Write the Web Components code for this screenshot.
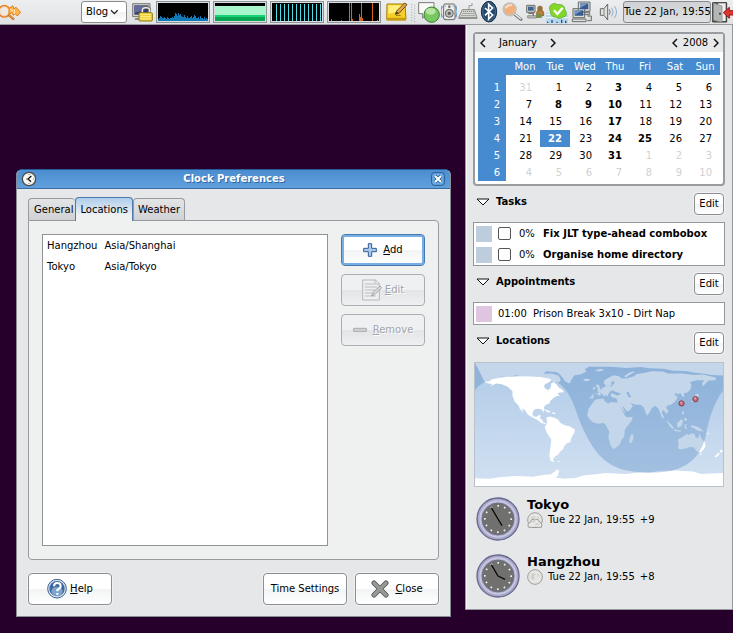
<!DOCTYPE html>
<html lang="en">
<head>
<meta charset="utf-8">
<title>Clock Preferences</title>
<style>
  body {
    margin: 0;
    min-height: 100vh;
    background: #26002b;
    color: #000;
    font: 10px/14px "DejaVu Sans", sans-serif;
  }
</style>
</head>
<body>
<desk-shell></desk-shell>
<script>
const html = String.raw;

class BaseElement extends HTMLElement {
  connectedCallback() {
    if (this.shadowRoot) return;
    this.attachShadow({ mode: "open" });
    this.shadowRoot.innerHTML = `<style>
      * { box-sizing: border-box; }
      button, select, input { font: inherit; color: inherit; margin: 0; }
      svg { display: block; flex: none; }
      ${this.constructor.css}
    </style>${this.render()}`;
  }
}

// width, viewBox, markup
const ICONS = {
  finder: [21, "0 0 63 72", `<g fill="none" stroke="#e98324"><circle cx="13" cy="34" r="17" stroke-width="5"/><circle cx="13" cy="34" r="14" fill="#eee9e4" stroke="#f6bd78" stroke-width="2"/><path d="M25 44L42 58" stroke="#bf6715" stroke-width="7"/><path d="M26 44L41 56" stroke="#ffb554" stroke-width="3"/></g><path d="M27 26l11-9 5 11 4-7 15 16-10 11-5-7-7 5-4-8-9 4z" fill="#ffb54c" stroke="#e58118" stroke-width="3"/><path d="M43 28v14M31 28l8 5" stroke="#fff0cf" stroke-width="3"/>`],
  lock: [23, "390 0 69 72", `<path d="M398 11h52v39h-52z" fill="#d5d6cf" stroke="#777970" stroke-width="3"/><path d="M403 16h42v28h-42z" fill="#343b70"/><path d="M403 16h42v9l-42 15z" fill="#656c9c"/><path d="M406 54h34v6h-36z" fill="#888a84"/><path d="M427 40V30q0-8 11-8t11 8v10" fill="none" stroke="#6c6c66" stroke-width="8"/><path d="M427 40V30q0-7 11-7t11 7v10" fill="none" stroke="#eee" stroke-width="4"/><rect x="417" y="38" width="40" height="25" rx="3" fill="#f1cf3f" stroke="#8f7a0b" stroke-width="3"/><path d="M421 43h32M421 50h32M421 57h32" stroke="#fff08b" stroke-width="3"/>`],
  note: [24, "429 0 72 72", `<path d="M438 12h54l3 46h-58z" fill="#f5d027" stroke="#aa800d" stroke-width="3"/><path d="M438 53h57v9h-58z" fill="#c99b12"/><path d="M442 16h46l-15 19-31 6z" fill="#fff07d"/><path d="M465 47q8-3 14 0" fill="none" stroke="#8e7010" stroke-width="3"/><path d="M463 43l4-10 24-24 7 5-23 25z" fill="#e9a744" stroke="#6c4b1d" stroke-width="3"/><path d="M463 43l4-8 5 4z" fill="#292929"/>`],
  grip: [6, "510 0 18 72", `<path d="M512 12v54M521 15v51" stroke="#a7a9ac" stroke-width="3" stroke-dasharray="3 5"/>`],
  chat: [22, "24 0 66 72", `<path d="M26 8h46v33H49L38 55V41H26z" fill="#f9faf8" stroke="#777a76" stroke-width="3"/><circle cx="65" cy="44" r="23" fill="#77c861" stroke="#387e2c" stroke-width="3"/><ellipse cx="62" cy="34" rx="15" ry="10" fill="#b7e5a4"/>`],
  speaker: [16, "93 0 48 72", `<path d="M97 18q-9 18 0 34M137 18q9 18 0 34" fill="none" stroke="#6a9ec5" stroke-width="4"/><rect x="101" y="12" width="34" height="47" rx="4" fill="#eeefed" stroke="#686a67" stroke-width="3"/><circle cx="118" cy="40" r="12" fill="#bfc1be" stroke="#5f605e" stroke-width="3"/><circle cx="118" cy="40" r="5" fill="#5e605e"/><circle cx="118" cy="20" r="4" fill="#777"/><path d="M106 17v2M130 17v2M106 55v1M130 55v1" stroke="#333" stroke-width="3"/>`],
  keyboard: [20, "144 0 60 72", `<path d="M177 29V17h9V9" fill="none" stroke="#979995" stroke-width="3"/><path d="M157 29h36l8 23h-54z" fill="#e4e5e1" stroke="#858783" stroke-width="3"/><path d="M145 52h57v5h-57z" fill="#92948f"/><path d="M159 34h33M157 40h38M154 46h43" stroke="#777974" stroke-width="3" stroke-dasharray="4 2"/>`],
  bluetooth: [20, "207 0 60 72", `<ellipse cx="237" cy="35" rx="23" ry="31" fill="#24456a" stroke="#152e49" stroke-width="3"/><ellipse cx="237" cy="35" rx="19" ry="27" fill="none" stroke="#62819d" stroke-width="2"/><path d="M225 24l23 21-12 12V13l12 11-23 22" fill="none" stroke="#fff" stroke-width="5"/>`],
  magnifier: [24, "270 0 72 72", `<path d="M314 43l19 15" stroke="#777975" stroke-width="9" stroke-linecap="round"/><path d="M315 43l17 13" stroke="#f4f4f2" stroke-width="4" stroke-linecap="round"/><circle cx="299" cy="28" r="19" fill="#f2ae7c" stroke="#c2c3be" stroke-width="5"/><path d="M287 25q6-12 19-9" fill="none" stroke="#ffe1c9" stroke-width="5"/>`],
  network: [20, "345 0 60 72", `<path d="M350 16h25v21h-25z" fill="#ced0cb" stroke="#6b6d6b" stroke-width="3"/><path d="M354 20h17v12h-17z" fill="#3e6291"/><path d="M355 40h15v11h22" fill="none" stroke="#747671" stroke-width="4"/><path d="M353 47h26v7h-26z" fill="#bcbdb8" stroke="#777" stroke-width="2"/><path d="M380 38q0-8 10-8t11 8v9h-21z" fill="#b88038" stroke="#765018" stroke-width="2"/><circle cx="390" cy="25" r="8" fill="#99723a"/><path d="M378 53q0-11 8-12 9 0 10 12z" fill="#6f9048"/>`],
  messenger: [22, "408 0 66 72", `<path d="M408 39h66v31h-66z" fill="#b8d7ed"/><path d="M409 43h64M409 53h64" stroke="#fff" stroke-width="3"/><path d="M413 69v-4M426 69v-9M441 69v-4M455 69v-10M467 69v-7" stroke="#174f81" stroke-width="4"/><path d="M425 13q9-6 18 1 20-3 22 15 11 20-7 23-12 7-18 0-19 0-19-18-7-14 4-21z" fill="#83d72a" stroke="#55a21f" stroke-width="2"/><path d="M432 31l10 11 16-19" fill="none" stroke="#fff" stroke-width="7"/>`],
  computers: [24, "27 0 72 72", `<g stroke="#696b68" stroke-width="3" fill="#dedfdb"><path d="M55 6h35v28H55zM61 38h28v6H61zM39 26h35v27H39zM37 57h41v8H37z"/><path d="M82 48h12v14H82"/></g><path d="M60 10h25v18H60zM44 31h25v16H44z" fill="#375b91"/><path d="M60 10h25L60 24zM44 31h25L44 44z" fill="#7897c0"/>`],
  volume: [28, "102 0 84 72", `<path d="M121 26h11l11-14v48l-11-14h-11z" fill="#dfe1df" stroke="#686a68" stroke-width="3"/><path d="M132 27v19" stroke="#858785" stroke-width="3"/><path d="M148 28q5 8 0 16" fill="none" stroke="#777977" stroke-width="3"/><path d="M155 23q9 13 0 26M163 18q13 18 0 36" fill="none" stroke="#8eafcc" stroke-width="3"/>`],
  exit: [21, "456 0 63 72", `<path d="M458 8h42v58h-42z" fill="#5c5e5c" stroke="#373937" stroke-width="3"/><path d="M474 10h23v53h-23z" fill="#eee"/><path d="M460 9l26 9v49l-26-6z" fill="#b4b6b3" stroke="#7d7f7c" stroke-width="2"/><circle cx="480" cy="41" r="3" fill="#333"/><path d="M490 38l18-16v10h13v13h-13v10z" fill="#dd3434" stroke="#981616" stroke-width="3"/>`],
  chevron: [9, "0 0 27 72", `<path d="M3 31l10 10 10-10" fill="none" stroke="#222" stroke-width="4"/>`],
};

class PanelIcon extends BaseElement {
  render() {
    const [width, box, art] = ICONS[this.getAttribute("name")];
    return `<svg width="${width}" height="24" viewBox="${box}" aria-hidden="true">${art}</svg>`;
  }
  static css = `:host { display: block; flex: none; }`;
}
customElements.define("panel-icon", PanelIcon);

class LoadGraph extends BaseElement {
  bars(values, step, color) {
    return values.map((v, i) => v ? `<rect x="${i * step}" y="${18 - v}" width="1" height="${v}" fill="${color}"/>` : "").join("");
  }
  render() {
    const cpu = [2,3,5,4,3,3,4,3,2,4,3,2,3,3,4,3,5,8,7,5,8,6,7,5,4,4,6,4,3,5,3,3,4,5,3,4,6,5,3,3,4,2,5,3,3,2,4,2,3,2];
    const disk = Array(50).fill(0);
    Object.assign(disk, { 2: 2, 12: 1, 20: 18, 22: 18, 23: 2, 30: 7, 31: 4, 32: 18, 33: 3, 43: 18, 48: 1 });
    const shapes = {
      cpu: this.bars(cpu, 1, "#1179b8"),
      memory: `<path d="M0 3h50v15H0z" fill="#a9f5cb"/><path d="M0 12h50v6H0z" fill="#18d273"/><path d="M0 14h50v4H0z" fill="#08a653"/>`,
      net: this.bars([0,17,17,17,17,17,17,17,17,17,17,17,17], 4, "#4fdbe6"),
      disk: this.bars(disk, 1, "#d8641c"),
    };
    return `<svg viewBox="0 0 50 18" shape-rendering="crispEdges" preserveAspectRatio="none" aria-hidden="true">${shapes[this.getAttribute("kind")]}</svg>`;
  }
  static css = `
    :host { display: block; width: 54px; height: 22px; flex: none; box-sizing: border-box; border: 1px solid #8e9396; padding: 1px; background: #d9dddf; }
    svg { width: 100%; height: 100%; background: #000; }
  `;
}
customElements.define("load-graph", LoadGraph);

class TopPanel extends BaseElement {
  render() {
    const tray = ["chat", "speaker", "keyboard", "bluetooth", "magnifier", "network", "messenger", "computers", "volume"];
    return html`
      <panel-icon name="finder"></panel-icon>
      <div class="applets">
        <label class="picker">
          <select aria-label="Search in"><option>Blog</option></select>
          <panel-icon name="chevron"></panel-icon>
        </label>
        <panel-icon name="lock"></panel-icon>
        <load-graph kind="cpu"></load-graph>
        <load-graph kind="memory"></load-graph>
        <load-graph kind="net"></load-graph>
        <load-graph kind="disk"></load-graph>
        <panel-icon name="note"></panel-icon>
        <panel-icon name="grip"></panel-icon>
      </div>
      <div class="tray">
        ${tray.map(name => `<panel-icon name="${name}"></panel-icon>`).join("")}
        <button class="clock">Tue 22 Jan, 19:55</button>
        <panel-icon name="exit"></panel-icon>
      </div>`;
  }
  static css = `
    :host { display: flex; align-items: center; box-sizing: border-box; height: 25px; background: linear-gradient(#eceeef, #e0e2e4); border-bottom: 1px solid #9b9b9f; }
    .applets { display: flex; align-items: center; gap: 3px; margin-left: auto; }
    .tray { display: flex; align-items: center; gap: 1px; margin-left: 1px; }
    .picker { display: flex; align-items: center; width: 46px; height: 22px; border: 1px solid #898b8d; border-radius: 3px; background: linear-gradient(#fff 50%, #f1f2f3 50%, #fff); }
    select { appearance: none; border: 0; padding: 0 0 0 4px; width: 28px; background: none; outline: 0; }
    .clock { width: 88px; height: 22px; padding: 0; border: 1px solid #888a8d; border-radius: 3px; background: linear-gradient(#cfd1d4, #dfe1e3); white-space: nowrap; }
  `;
}
customElements.define("top-panel", TopPanel);

class PushButton extends BaseElement {
  render() {
    const disabled = this.hasAttribute("disabled") ? "disabled" : "";
    return `<button ${disabled}><slot name="icon"></slot><span><slot></slot></span></button>`;
  }
  static css = `
    :host { display: block; width: 84px; height: 32px; }
    :host([small]) { width: 30px; height: 22px; }
    button {
      display: flex; align-items: center; justify-content: center; gap: 3px;
      width: 100%; height: 100%; padding: 0;
      border: 1px solid #8b8d90; border-radius: 4px;
      background: linear-gradient(#fff 50%, #f2f3f4 50%, #fff);
      box-shadow: 0 0 0 1px #f0f1f2; white-space: nowrap;
    }
    :host([focused]) button { border-color: #4779ae; box-shadow: inset 0 0 0 2px #77aee3; gap: 6px; }
    :host([spaced]) button { gap: 6px; }
    button:disabled { color: #a3a6a8; border-color: #aaadb0; background: linear-gradient(#eff0f1 50%, #e3e4e6 50%, #eff0f1); text-shadow: 1px 1px #fff; }
  `;
}
customElements.define("push-button", PushButton);

class PrefsDialog extends BaseElement {
  render() {
    return html`
      <header>
        <svg width="16" height="16" viewBox="0 0 48 48" aria-hidden="true"><circle cx="24" cy="24" r="20" fill="#f7f7f3" stroke="#4d4f48" stroke-width="4"/><path d="M31 15L21 24l9 8" fill="none" stroke="#111" stroke-width="4"/><path d="M15 24h7M24 9v3M24 36v3M36 24h3" stroke="#777" stroke-width="3"/></svg>
        <h1>Clock Preferences</h1>
        <button class="close" aria-label="Close window"><svg width="14" height="14" viewBox="0 0 42 42"><rect x="2" y="2" width="38" height="38" rx="8" fill="#6caae3" stroke="#23588e" stroke-width="3"/><path d="M12 12l18 18M30 12L12 30" stroke="#24588b" stroke-width="10"/><path d="M12 12l18 18M30 12L12 30" stroke="#fff" stroke-width="6"/></svg></button>
      </header>
      <div class="content">
        <nav role="tablist">
          <button role="tab" class="first">General</button>
          <button role="tab" aria-selected="true">Locations</button>
          <button role="tab">Weather</button>
        </nav>
        <section role="tabpanel">
          <div class="list">
            <table aria-label="Locations">
              <tr><td>Hangzhou</td><td>Asia/Shanghai</td></tr>
              <tr><td>Tokyo</td><td>Asia/Tokyo</td></tr>
            </table>
          </div>
          <div class="actions">
            <push-button focused>
              <svg slot="icon" width="14" height="14" viewBox="0 0 42 42"><path d="M16 2h10v14h14v10H26v14H16V26H2V16h14z" fill="#a9c8ea" stroke="#315e95" stroke-width="3"/></svg>
              <u>A</u>dd
            </push-button>
            <push-button disabled>
              <svg slot="icon" width="20" height="22" viewBox="0 0 60 66"><path d="M2 3h38l12 11v49H2z" fill="#eff0f1" stroke="#b5b8ba" stroke-width="3"/><path d="M39 3v12h13M8 15h29M8 24h37M8 33h31M8 42h25M8 51h33" fill="none" stroke="#babdbf" stroke-width="3"/><path d="M29 51l5-12 20-18 5 5-20 20z" fill="#d7d9da" stroke="#a3a6a8" stroke-width="3"/></svg>
              <u>E</u>dit
            </push-button>
            <push-button disabled spaced>
              <svg slot="icon" width="14" height="6" viewBox="0 0 42 18"><path d="M2 4h38v9H2z" fill="#d1d3d5" stroke="#a9acae" stroke-width="3"/></svg>
              <u>R</u>emove
            </push-button>
          </div>
        </section>
        <footer>
          <push-button class="help">
            <svg slot="icon" width="20" height="20" viewBox="0 0 60 60"><circle cx="30" cy="29" r="28" fill="#dfe9f2" stroke="#345d8f" stroke-width="3"/><circle cx="30" cy="29" r="23" fill="#3d679e"/><ellipse cx="30" cy="37" rx="17" ry="14" fill="#7da2cb"/><path d="M21 22q0-10 10-10t10 9q0 7-10 12v4" fill="none" stroke="#fff" stroke-width="6"/><path d="M28 42h6v6h-6z" fill="#fff"/></svg>
            <u>H</u>elp
          </push-button>
          <push-button>Time Settings</push-button>
          <push-button spaced>
            <svg slot="icon" width="18" height="18" viewBox="0 0 54 54"><g fill="none" stroke-linecap="round"><path d="M9 9l36 36M45 9L9 45" stroke="#565955" stroke-width="15"/><path d="M9 9l36 36M45 9L9 45" stroke="#969995" stroke-width="10"/></g></svg>
            <u>C</u>lose
          </push-button>
        </footer>
      </div>`;
  }
  static css = `
    :host { display: block; box-sizing: border-box; border: 1px solid #8b8d94; border-top-color: #235c99; border-radius: 6px 6px 0 0; background: #e6e7e9; }
    header { display: flex; align-items: center; height: 19px; padding: 0 5px 0 4px; color: #fff; background: linear-gradient(#4b8dd0, #61a0dd); border-bottom: 1px solid #386ca5; border-radius: 5px 5px 0 0; }
    h1 { flex: 1; margin: 0; font: inherit; font-weight: bold; text-align: center; text-shadow: 1px 1px #2c659f; }
    .close { padding: 0; border: 0; background: none; }
    .content { padding: 7px 11px 11px; }
    nav { display: flex; align-items: flex-end; height: 24px; }
    nav button { height: 22px; padding: 0 4px; border: 1px solid #989a9d; border-bottom: 0; border-radius: 4px 4px 0 0; background: linear-gradient(#e4e5e7, #cfd1d4); }
    nav .first { padding: 0 2px 0 5px; border-right: 0; }
    nav [aria-selected] { height: 24px; margin-bottom: -1px; border-color: #4c79a9; background: linear-gradient(#aecded, #eff1f1 75%); z-index: 1; }
    section { display: flex; gap: 13px; min-height: 340px; padding: 13px; border: 1px solid #989a9d; border-radius: 0 4px 4px 4px; background: #eff1f1; }
    .list { flex: 1; border: 1px solid #919395; background: #fff; }
    table { border-spacing: 0; }
    td { height: 21px; padding: 0 3px 0 4px; }
    .actions { display: flex; flex-direction: column; gap: 8px; }
    footer { display: flex; gap: 8px; margin-top: 13px; }
    .help { margin-right: auto; }
  `;
}
customElements.define("prefs-dialog", PrefsDialog);

class MonthCalendar extends BaseElement {
  render() {
    const days = ["Mon", "Tue", "Wed", "Thu", "Fri", "Sat", "Sun"];
    const busy = [3, 8, 9, 10, 17, 24, 25, 31];
    const rows = [];
    for (let week = 0; week < 6; week++) {
      const cells = days.map((_, i) => {
        const n = week * 7 + i;
        const outside = n < 1 || n > 31;
        const day = n < 1 ? 31 : n > 31 ? n - 31 : n;
        const name = outside ? "outside" : n === 22 ? "today" : busy.includes(n) ? "busy" : "";
        return `<td class="${name}">${day}</td>`;
      }).join("");
      rows.push(`<tr><th scope="row">${week + 1}</th>${cells}</tr>`);
    }
    const arrow = (label, d) => `<button aria-label="${label}"><svg width="6" height="10" viewBox="0 0 6 10"><path d="${d}" fill="none" stroke="#111" stroke-width="1.5"/></svg></button>`;
    const prev = "M5 1L1 5l4 4";
    const next = "M1 1l4 4-4 4";
    return html`
      <header>
        ${arrow("Previous month", prev)}<span class="month">January</span>${arrow("Next month", next)}
        <i></i>
        ${arrow("Previous year", prev)}<span class="year">2008</span>${arrow("Next year", next)}
      </header>
      <table>
        <thead><tr><td></td>${days.map(d => `<th scope="col">${d}</th>`).join("")}</tr></thead>
        <tbody><tr class="space"><th></th></tr>${rows.join("")}</tbody>
      </table>`;
  }
  static css = `
    :host { display: block; box-sizing: border-box; border: 2px solid #999c9f; border-radius: 4px; background: #fff; }
    header { display: flex; align-items: center; height: 18px; padding: 0 4px 0 5px; background: #e6e8e9; }
    header button { display: flex; padding: 0; border: 0; background: none; }
    .month { width: 64px; text-align: center; }
    .year { width: 35px; text-align: center; }
    i { flex: 1; }
    table { width: calc(100% - 6px); margin: 6px 3px 3px; border-spacing: 0; table-layout: fixed; }
    th, td { height: 17px; padding: 0; line-height: 17px; }
    th { font-weight: normal; }
    thead { color: #fff; background: #468bd0; }
    tr > :first-child { width: 32px; }
    tbody th { padding-right: 10px; text-align: right; color: #fff; background: linear-gradient(90deg, #468bd0 28px, #fff 28px); }
    tbody td { padding-right: 8px; text-align: right; }
    .space th { height: 4px; line-height: 4px; }
    .busy, .today { font-weight: bold; }
    .today { color: #fff; background: #468bd0; }
    .outside { color: #cfd1d3; }
  `;
}
customElements.define("month-calendar", MonthCalendar);

class FoldSection extends BaseElement {
  render() {
    return html`
      <header>
        <button class="toggle" aria-expanded="true"><svg width="14" height="8" viewBox="0 0 14 8"><path d="M1 1h12L7 7z" fill="#fff" stroke="#111"/></svg><h2>${this.getAttribute("heading")}</h2></button>
        <push-button small>Edit</push-button>
      </header>
      <slot></slot>`;
  }
  static css = `
    :host { display: block; margin-top: 7px; }
    header { display: flex; justify-content: space-between; margin-bottom: 7px; padding: 0 1px 0 3px; }
    .toggle { display: flex; align-items: center; gap: 6px; height: 18px; padding: 0; border: 0; background: none; }
    h2 { margin: 0; font: inherit; font-weight: bold; }
  `;
}
customElements.define("fold-section", FoldSection);

class TaskList extends BaseElement {
  render() {
    const tasks = ["Fix JLT type-ahead combobox", "Organise home directory"];
    return tasks.map(task => `<label><i></i><input type="checkbox"><span>0%</span><b>${task}</b></label>`).join("");
  }
  static css = `
    :host { display: block; border: 1px solid #96989b; background: #fff; }
    label { display: flex; align-items: center; height: 21px; padding-left: 2px; }
    i { width: 16px; height: 16px; background: #bdcddd; }
    input { appearance: none; width: 13px; height: 13px; margin: 0 8px 0 6px; border: 1px solid #555; border-radius: 2px; background: #fff; }
    span { width: 24px; }
  `;
}
customElements.define("task-list", TaskList);

class AppointmentList extends BaseElement {
  render() {
    return `<i></i><time>01:00</time><span>Prison Break 3x10 - Dirt Nap</span>`;
  }
  static css = `
    :host { display: flex; align-items: center; box-sizing: border-box; height: 23px; padding-left: 2px; border: 1px solid #96989b; background: #fff; }
    i { width: 16px; height: 16px; margin-right: 6px; background: #dfc5df; }
    time { width: 35px; }
  `;
}
customElements.define("appointment-list", AppointmentList);

class WorldMap extends BaseElement {
  render() {
    return html`
      <svg viewBox="28 22 748 372" role="img" aria-label="World map with daylight">
        <defs><linearGradient id="sea" x2="0" y2="1"><stop stop-color="#b0cbe8"/><stop offset="1" stop-color="#d2e1f2"/></linearGradient></defs>
        <path fill="url(#sea)" d="M28 22h748v372H28z"/>
        <g fill="#fff">
          <path d="M28 22h748v38l-34-2-16-3-40-4-22-5-38-1-30-6-42-1-24-4-45 3-50-4h-63l-12 7 4 8-16 8-20 3-9 13-5 12-14-6-7-11-10-12-10-6-30-2-9 8 24-1 22 6 7 13-6 8-15-5-14-9-32-3-46 4-18-9-19 3-12 3-17-2-23 12-13-2-13 9z"/>
          <path d="M60 82l22-11 20-6 28-2 38-2 36 4 36-5 22 10-11 10-12 6-3 7 4 6 9 5 7-7 2-13 7-5 9 8 7 9 11 7 4 7-12 1-8 3 8 5-13 4-8 6-7 6-4 9-11 5-5 6v16l-6-8-9-3-10 1-7 5-3 10 4 7 9 1 7-5 6 1-4 9 8 4 2 8 11 3-4 2-12-3-10-8-19-10-12-8-9-13-9-5 5 14-11-13-3-9-12-12-7-18v-14l-14-13-18-8-17-2-18 8 6-7z"/>
          <path d="M231 161l10 1 17 8-10 1-8-6zM260 171l11 1-2 4-9-2zM243 187l11-4 16 5 9 5 6 9 14 8 13 3 17 9-1 10-8 13-5 16-10 3-8 9-4 10-8 6-6 10-10 5-6 9 5 8-12-4-4-16 3-20 3-28-14-21-6-17 8-12zM277 317l7 1-5 3z"/>
          <path d="M390 133l21-4 7 2 1 7 12 6 6-4 24 2 5 11 6 12 8 15 6 6 18-1-4 12-10 13-10 13-2 21-8 10-5 12-7 8-9 6-6 1-7-14-6-20 3-17-10-20-7-7-19 2-15-5-9-10-7-10 4-19 9-13zM501 236l5 4-1 13-6 11-6-2 1-13zM385 129l1-14 15-1-4-9 9-1 8-8 8-2-1-9 5 6 14 1 9-10-4-7-7 7 3 6-10 3-8-2-7-6 3-9 13-8 15-7 15 3 9 7 16-1 21-6 6-6 23-4 24-5 33 1 17 6 42 0 35 4 27-1 39 9v8l-21 1-8 7-10 11-2-10 7-9-24 0-20 6 5 8-3 13-9 10-11 2 2 11-7-1-5-10-10 3-3-4-6 5 10 7-4 9-5 7-11 8-12 3-3 7 8 9-7 9-9-13-5 8 5 11 4 9-9-5-9-25-10-10-10 6-8 14-7 10-8-19-4-8-7-5-18-2-13-5 7 9-8 13-17 8-10-16-11-15-3-13-13-2-5-6 2-6 14-2-8-8-10 4-4 7-4 8-6-6-2 7-9-10-6-4 5 9-9 1-5-7-9 1-8 9-6 5z"/>
          <path d="M397 104l1-7-6-6 4-5 6 3 5 14-5 3zM387 94l5 3-5 6-5-2zM354 72l8-3 13 2-4 5-10 1zM388 44l20-5 11 4-16 5zM478 62l12-9 16-6 4 2-18 10-8 7z"/>
          <path d="M697 115l7 3-2 5-4 9-11 8-8-1 5-4 9-9-2-7zM604 195l7 4 15 15 1 8-9-6zM628 222l23 4-4 3-19-3zM636 205l14-13 6 4-5 16-11 5zM659 208l9-1-5 4 4 9-5 1zM680 210l12 2 14 6 13 12-10-3-9-1-13-8-8-3zM653 167l6 3-1 9-5-5zM660 187l7 3-1 8-7-3z"/>
          <path d="M640 253l12-7 15-10 7 3 6-5 11 2 2 10 8 4 4-15 6 15 10 11 3 11-7 12-9 8-11-3-9-12-12-2-13 5-16 3-7-4 2-10zM705 295h7l-3 5zM770 283l6 3-5 7-5-2zM762 293l5 3-11 10-6-1zM728 231l8 6-6-1zM742 243l8 8z"/>
          <path d="M28 370l43 1 37-5 45-3 49 2 37-6 18-1 19-15 6 3-4 16-7 5 25 4 36-2 22-8 32-3 36-4 60 3 46-5 24 1 35-6 42-1 56 3 25 8 66-3v45H28z"/>
        </g>
        <g fill="#b6cfea"><path d="M484 112l7-4 3 8 5 8-7 3-3-8zM441 113l11-4 17 6-12 5zM473 151l10 13 10 17-4 1-11-17zM506 157l11 7-5 3z"/></g>
        <path fill="#3d76b9" fill-opacity=".3" d="M28 104Q44 81 80 71q55-13 116-8 61 0 90 24 28 25 46 77 19 60 50 109 32 50 83 68 42 14 112 11 49-1 83-20 45-24 62-82 18-98 54-144V22H28z"/>
        <g fill="#bd6b7b" stroke="#8f4254" stroke-width="3"><circle cx="651" cy="144" r="8"/><circle cx="693" cy="131" r="8"/></g>
        <g fill="#e7abb5"><circle cx="650" cy="142" r="3"/><circle cx="692" cy="129" r="3"/></g>
      </svg>`;
  }
  static css = `
    :host { display: block; margin: 8px 1px 0; border: 1px solid #b9c1ca; }
    svg { width: 100%; }
  `;
}
customElements.define("world-map", WorldMap);

class CityClock extends BaseElement {
  render() {
    const city = this.getAttribute("city");
    const dots = Array.from({ length: 12 }, (_, i) => `<rect x="64" y="24" width="5" height="5" transform="rotate(${i * 30} 66 66)"/>`).join("");
    const cloud = this.hasAttribute("cloudy") ? `<path d="M5 46q-6-11 5-15 3-12 13-7 12-5 14 6 11 4 6 16z" fill="#e9eae6" stroke="#777974" stroke-width="2"/><path d="M14 31q4-5 9 0M25 38q7-6 11 0" fill="none" stroke="#a1a39f" stroke-width="2"/>` : "";
    return html`
      <svg width="44" height="44" viewBox="0 0 132 132" role="img" aria-label="${city} clock">
        <circle cx="66" cy="66" r="63" fill="#a7a7ca" stroke="#68688f" stroke-width="4"/>
        <circle cx="66" cy="66" r="54" fill="#b8b8d7" stroke="#c9c9e0" stroke-width="4"/>
        <circle cx="66" cy="66" r="48" fill="#70716f" stroke="#70708c" stroke-width="3"/>
        <g fill="#f3f3ef">${dots}</g>
        <path d="M66 66L46 32M66 66L${this.getAttribute("hour")}" stroke="#080808" stroke-width="4"/>
      </svg>
      <div>
        <h3>${city}</h3>
        <p><svg width="16" height="16" viewBox="0 0 48 48" aria-hidden="true"><circle cx="24" cy="24" r="22" fill="#e6e7e2" stroke="#777974" stroke-width="2"/><path d="M13 15l9-4 4 6-6 5 4 7-8 5-5-8zM31 12l7 8-7 5z" fill="#d0d1cd"/>${cloud}</svg><time>Tue 22 Jan, 19:55</time><span>${this.getAttribute("offset")}</span></p>
      </div>`;
  }
  static css = `
    :host { display: flex; gap: 7px; height: 44px; padding-left: 3px; }
    h3 { margin: 0; font-size: 13px; line-height: 15px; }
    p { display: flex; align-items: center; gap: 5px; margin: 0; line-height: 16px; }
  `;
}
customElements.define("city-clock", CityClock);

class ClockPopup extends BaseElement {
  render() {
    return html`
      <month-calendar></month-calendar>
      <fold-section heading="Tasks"><task-list></task-list></fold-section>
      <fold-section heading="Appointments"><appointment-list></appointment-list></fold-section>
      <fold-section heading="Locations"><world-map></world-map></fold-section>
      <div class="cities">
        <city-clock city="Tokyo" hour="78 86" offset="+9" cloudy></city-clock>
        <city-clock city="Hangzhou" hour="87 76" offset="+8"></city-clock>
      </div>`;
  }
  static css = `
    :host { display: block; box-sizing: border-box; padding: 7px 7px 11px; border: 1px solid #96989d; border-top: 0; background: #e6e7e9; box-shadow: inset 1px 0 #fafafa; }
    .cities { display: grid; gap: 13px; margin-top: 10px; }
  `;
}
customElements.define("clock-popup", ClockPopup);

class DeskShell extends BaseElement {
  render() {
    return `<top-panel></top-panel><main><prefs-dialog></prefs-dialog><clock-popup></clock-popup></main>`;
  }
  static css = `
    :host { display: block; }
    main { display: flex; align-items: flex-start; gap: 14px; padding-left: 16px; }
    prefs-dialog { flex: 1; margin-top: 144px; }
    clock-popup { width: 268px; flex: none; }
  `;
}
customElements.define("desk-shell", DeskShell);
</script>
</body>
</html>
